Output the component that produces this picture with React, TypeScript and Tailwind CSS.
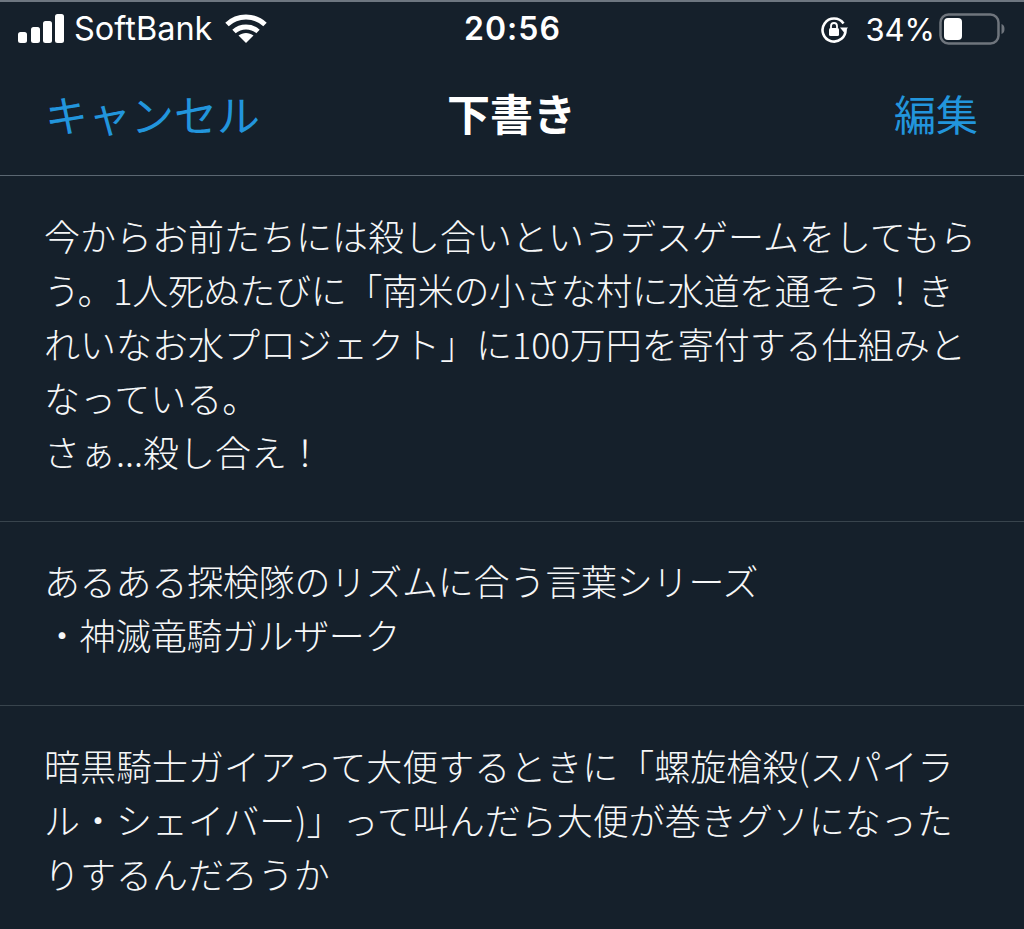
const cjk = { fontFamily: '"Noto Sans CJK JP", "Noto Sans", sans-serif' };

function Draft({ lines, cls }: { lines: [string, string][]; cls: string }) {
  return (
    <div className={`border-b border-[#38444d] pl-[44px] ${cls}`}>
      {lines.map(([l, t], i) => (
        <div key={i} className={`h-[54px] whitespace-nowrap text-[36px] font-light leading-[54px] text-[#f6f7f8] ${t}`}>
          {l}
        </div>
      ))}
    </div>
  );
}

export default function App() {
  return (
    <div className="h-[929px] w-[1024px] overflow-hidden border-t-2 border-[#6d7680] bg-[#15202b]" style={cjk}>
      <div className="flex h-[54px] items-center justify-between pl-[18px] pr-[19px] text-white">
        <div className="flex items-center">
          <svg width="46" height="32" viewBox="0 0 46 32" fill="#fff">
            <rect x="0" y="19" width="9" height="11" rx="2.5" />
            <rect x="13" y="14" width="9" height="16" rx="2.5" />
            <rect x="25" y="8" width="9" height="22" rx="2.5" />
            <rect x="37" y="1" width="9" height="29" rx="2.5" />
          </svg>
          <span className="ml-[10px] text-[32.5px] leading-none" style={{ fontFamily: 'Inter, sans-serif' }}>SoftBank</span>
          <svg className="ml-[13px]" width="42" height="32" viewBox="0 0 42 32" fill="none" stroke="#fff" strokeWidth="5">
            <path d="M2 11.5C12.5 1.5 29.5 1.5 40 11.5" />
            <path d="M9 18.5C15.5 12.5 26.5 12.5 33 18.5" />
            <path d="M21 30L13.5 22.5C18 19 24 19 28.5 22.5Z" fill="#fff" stroke="none" />
          </svg>
        </div>
        <div className="absolute left-[464px] top-[10px] text-[32px] font-semibold leading-[38px] tracking-[1px]" style={{ fontFamily: 'Inter, sans-serif' }}>20:56</div>
        <div className="flex items-center">
          <svg width="30" height="30" viewBox="0 0 30 30" fill="none">
            <path d="M24.5 9.5A11.5 11.5 0 1 0 26.5 15" stroke="#fff" strokeWidth="2.6" />
            <path d="M21 13.5L29 13.5L25 18.5Z" fill="#fff" />
            <rect x="10" y="14" width="10" height="8" rx="1.5" fill="#fff" />
            <path d="M12 14V12a3 3 0 0 1 6 0v2" stroke="#fff" strokeWidth="1.8" />
          </svg>
          <span className="ml-[16px] text-[31px] leading-none" style={{ fontFamily: 'Inter, sans-serif' }}>34%</span>
          <svg className="ml-[4px]" width="66" height="32" viewBox="0 0 66 32" fill="none">
            <rect x="1.5" y="1.5" width="58" height="29" rx="8" stroke="#6f757d" strokeWidth="2.5" />
            <rect x="5" y="5" width="18" height="22" rx="4" fill="#fff" />
            <path d="M62.5 11c2 .5 3 2.5 3 5s-1 4.5-3 5Z" fill="#6f757d" />
          </svg>
        </div>
      </div>
      <div className="relative flex h-[120px] items-center justify-between border-b border-[#5b6772] pb-[5px] pl-[45px] pr-[46px]">
        <span className="text-[43px] leading-none font-normal text-[#2295dc]">キャンセル</span>
        <span className="absolute left-[447px] top-[35px] text-[43px] font-bold leading-none text-white">下書き</span>
        <span className="text-[42px] leading-none font-normal text-[#2295dc]">編集</span>
      </div>
      <Draft
        cls="h-[346px] pt-[32px]"
        lines={[
          ['今からお前たちには殺し合いというデスゲームをしてもら', ''],
          ['う。1人死ぬたびに「南米の小さな村に水道を通そう！き', 'tracking-[-0.3px]'],
          ['れいなお水プロジェクト」に100万円を寄付する仕組みと', ''],
          ['なっている。', ''],
          ['さぁ...殺し合え！', ''],
        ]}
      />
      <Draft
        cls="h-[184px] pt-[31px]"
        lines={[
          ['あるある探検隊のリズムに合う言葉シリーズ', 'tracking-[-0.2px]'],
          ['・神滅竜騎ガルザーク', 'tracking-[-0.4px]'],
        ]}
      />
      <Draft
        cls="h-[224px] border-b-0 pt-[32px]"
        lines={[
          ['暗黒騎士ガイアって大便するときに「螺旋槍殺(スパイラ', ''],
          ['ル・シェイバー)」って叫んだら大便が巻きグソになった', ''],
          ['りするんだろうか', ''],
        ]}
      />
    </div>
  );
}
